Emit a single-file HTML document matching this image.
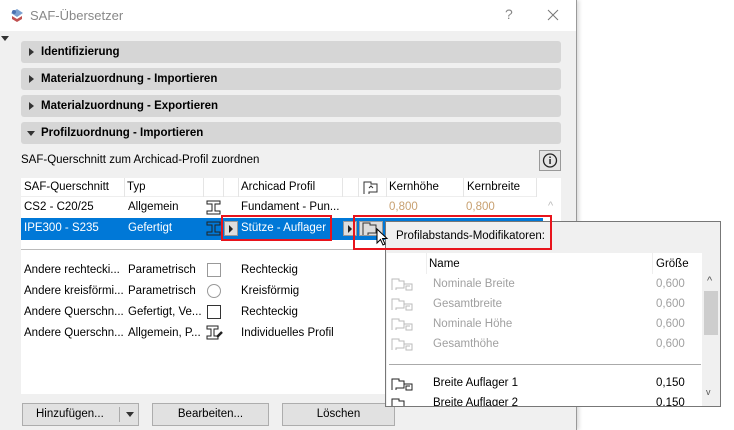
<!DOCTYPE html>
<html><head><meta charset="utf-8"><style>
*{box-sizing:border-box;margin:0;padding:0}
body{width:734px;height:430px;overflow:hidden;background:#fff;font-family:"Liberation Sans",sans-serif;font-size:11.5px;color:#000;position:relative}
.a{position:absolute;white-space:nowrap}
.dlg{position:absolute;left:0;top:0;width:577px;height:430px;background:#f0f0f0;border-right:1px solid #9a9a9a;box-shadow:2px 0 4px rgba(0,0,0,.15)}
.title{position:absolute;left:0;top:0;width:576px;height:31px;background:#fff}
.sec{position:absolute;left:21px;width:540px;height:22px;background:#d6d6d6;border-radius:3px;font-weight:bold;font-size:11.5px;line-height:22px;padding-left:20px}
.sec:before{content:"";position:absolute;left:8px;top:7px;border-left:5px solid #333;border-top:4px solid transparent;border-bottom:4px solid transparent}
.sec.open:before{left:6px;top:9px;border-top:5px solid #333;border-left:4px solid transparent;border-right:4px solid transparent;border-bottom:0}
.btn{position:absolute;top:403px;height:23px;background:#e1e1e1;border:1px solid #adadad;text-align:center;line-height:21px}
.g{color:#a0a0a0}
.o{color:#c8a070}
.red{position:absolute;border:2px solid #e8141c}
</style></head><body>
<div class="dlg">
<div class="title"></div>
<svg class="a" style="left:9px;top:7px" width="16" height="16" viewBox="0 0 16 16"><path d="M2 6 L8 2 L14 6 L8 10Z" fill="#7aa0d0"/><path d="M3 9 L8 12 L13 9 L13 12 L8 15 L3 12Z" fill="#c05050"/><circle cx="5" cy="5" r="2" fill="#4a70b0"/></svg>
<div class="a" style="left:30px;top:8px;font-size:13px;color:#888">SAF-Übersetzer</div>
<div class="a" style="left:505px;top:6px;font-size:14px;color:#888">?</div>
<svg class="a" style="left:547px;top:9px" width="12" height="12"><path d="M1 1L11 11M11 1L1 11" stroke="#777" stroke-width="1"/></svg>
<div class="a" style="left:1px;top:36px;border-top:5px solid #333;border-left:4px solid transparent;border-right:4px solid transparent"></div>
<div class="sec" style="top:41px">Identifizierung</div>
<div class="sec" style="top:68px">Materialzuordnung - Importieren</div>
<div class="sec" style="top:95px">Materialzuordnung - Exportieren</div>
<div class="sec open" style="top:122px">Profilzuordnung - Importieren</div>
<div class="a" style="left:21px;top:154px">SAF-Querschnitt zum Archicad-Profil zuordnen</div>
<div class="a" style="left:539px;top:150px;width:22px;height:21px;border:1px solid #999;background:#e4e4e4"><svg width="20" height="19"><circle cx="10" cy="9.5" r="6.5" fill="none" stroke="#222" stroke-width="1.3"/><rect x="9.3" y="8" width="1.5" height="5" fill="#222"/><rect x="9.3" y="5.5" width="1.5" height="1.5" fill="#222"/></svg></div>
<div class="a" style="left:21px;top:178px;width:540px;height:216px;background:#fff"></div>
<div class="a" style="left:21px;top:178px;width:515px;height:19px;border-bottom:1px solid #eee"></div>
<div class="a" style="left:124px;top:178px;height:19px;border-left:1px solid #e5e5e5"></div>
<div class="a" style="left:203px;top:178px;height:19px;border-left:1px solid #e5e5e5"></div>
<div class="a" style="left:223px;top:178px;height:19px;border-left:1px solid #e5e5e5"></div>
<div class="a" style="left:238px;top:178px;height:19px;border-left:1px solid #e5e5e5"></div>
<div class="a" style="left:342px;top:178px;height:19px;border-left:1px solid #e5e5e5"></div>
<div class="a" style="left:358px;top:178px;height:19px;border-left:1px solid #e5e5e5"></div>
<div class="a" style="left:386px;top:178px;height:19px;border-left:1px solid #e5e5e5"></div>
<div class="a" style="left:463px;top:178px;height:19px;border-left:1px solid #e5e5e5"></div>
<div class="a" style="left:536px;top:178px;height:19px;border-left:1px solid #e5e5e5"></div>
<div class="a" style="left:24px;top:181px">SAF-Querschnitt</div>
<div class="a" style="left:127px;top:181px">Typ</div>
<div class="a" style="left:241px;top:181px">Archicad Profil</div>
<svg class="a" style="left:363px;top:180px" width="18" height="15"><path d="M1 14V2H8V4H14V12H6V14" fill="none" stroke="#333"/><path d="M6 8L8 6L10 8" fill="none" stroke="#333"/></svg>
<div class="a" style="left:389px;top:181px">Kernhöhe</div>
<div class="a" style="left:467px;top:181px">Kernbreite</div>
<div class="a" style="left:24px;top:201px">CS2 - C20/25</div>
<div class="a" style="left:128px;top:201px">Allgemein</div>
<svg class="a" style="left:206px;top:200px" width="16" height="15"><path d="M1 1H14V4H9V11H14V14H1V11H6V4H1Z" fill="none" stroke="#222"/></svg>
<div class="a" style="left:241px;top:201px">Fundament - Pun...</div>
<div class="a o" style="left:389px;top:201px">0,800</div>
<div class="a o" style="left:466px;top:201px">0,800</div>
<div class="a" style="left:548px;top:200px;color:#bbb;font-size:11px">^</div>
<div class="a" style="left:21px;top:218px;width:522px;height:22px;background:#0078d7"></div>
<div class="a" style="left:24px;top:222px;color:#fff">IPE300 - S235</div>
<div class="a" style="left:128px;top:222px;color:#fff">Gefertigt</div>
<svg class="a" style="left:206px;top:221px" width="16" height="15"><path d="M1 1H14V4H9V11H14V14H1V11H6V4H1Z" fill="none" stroke="#222"/></svg>
<div class="a" style="left:224px;top:221px;width:14px;height:15px;background:#ddd;border:1px solid #999"></div>
<div class="a" style="left:229px;top:225px;border-left:4px solid #222;border-top:4px solid transparent;border-bottom:4px solid transparent"></div>
<div class="a" style="left:241px;top:222px;color:#fff">Stütze - Auflager</div>
<div class="a" style="left:343px;top:221px;width:14px;height:15px;background:#ddd;border:1px solid #999"></div>
<div class="a" style="left:348px;top:225px;border-left:4px solid #222;border-top:4px solid transparent;border-bottom:4px solid transparent"></div>
<div class="a" style="left:359px;top:221px;width:24px;height:15px;background:#ddd;border:1px solid #999"></div>
<svg class="a" style="left:362px;top:221px" width="18" height="15"><path d="M1 14V2H8V4H14V12H6V14" fill="none" stroke="#333"/></svg>
<div class="a" style="left:21px;top:249px;width:515px;border-top:1px solid #bbb"></div>
<div class="a" style="left:24px;top:264px">Andere rechtecki...</div>
<div class="a" style="left:128px;top:264px">Parametrisch</div>
<div class="a" style="left:207px;top:263px;width:14px;height:14px;border:1px solid #999"></div>
<div class="a" style="left:241px;top:264px">Rechteckig</div>
<div class="a" style="left:24px;top:285px">Andere kreisförmi...</div>
<div class="a" style="left:128px;top:285px">Parametrisch</div>
<div class="a" style="left:207px;top:284px;width:14px;height:14px;border:1px solid #999;border-radius:50%"></div>
<div class="a" style="left:241px;top:285px">Kreisförmig</div>
<div class="a" style="left:24px;top:306px">Andere Querschn...</div>
<div class="a" style="left:128px;top:306px">Gefertigt, Ve...</div>
<div class="a" style="left:207px;top:305px;width:14px;height:14px;border:1px solid #333"></div>
<div class="a" style="left:241px;top:306px">Rechteckig</div>
<div class="a" style="left:24px;top:327px">Andere Querschn...</div>
<div class="a" style="left:128px;top:327px">Allgemein, P...</div>
<svg class="a" style="left:206px;top:325px" width="18" height="16"><path d="M1 1H12V4H8V11H12V14H1V11H5V4H1Z" fill="none" stroke="#222"/><path d="M11 12L16 7" stroke="#222" stroke-width="2.5"/></svg>
<div class="a" style="left:241px;top:327px">Individuelles Profil</div>
<div class="btn" style="left:22px;width:117px;text-align:left;padding-left:13px">Hinzufügen...<span style="position:absolute;left:96px;top:3px;height:15px;border-left:1px solid #aaa"></span><span style="position:absolute;left:103px;top:8px;border-top:5px solid #333;border-left:4px solid transparent;border-right:4px solid transparent"></span></div>
<div class="btn" style="left:152px;width:117px">Bearbeiten...</div>
<div class="btn" style="left:282px;width:113px">Löschen</div>
</div>
<!-- popup -->
<div class="a" style="left:385px;top:221px;width:336px;height:186px;background:#f0f0f0;border:1px solid #777"></div>
<div class="a" style="left:396px;top:230px">Profilabstands-Modifikatoren:</div>
<div class="a" style="left:387px;top:253px;width:315px;height:153px;background:#fff"></div>
<div class="a" style="left:702px;top:274px;width:18px;height:132px;background:#f0f0f0"></div>
<div class="a" style="left:704px;top:291px;width:14px;height:44px;background:#cdcdcd"></div>
<div class="a" style="left:707px;top:275px;font-size:11px;color:#555">^</div>
<div class="a" style="left:706px;top:387px;font-size:9px;color:#555">v</div>
<div class="a" style="left:426px;top:253px;height:21px;border-left:1px solid #eee"></div>
<div class="a" style="left:652px;top:253px;height:21px;border-left:1px solid #eee"></div>
<div class="a" style="left:429px;top:258px">Name</div>
<div class="a" style="left:656px;top:258px">Größe</div>
<div class="a g" style="left:433px;top:278px">Nominale Breite</div><div class="a g" style="left:656px;top:278px">0,600</div>
<div class="a g" style="left:433px;top:298px">Gesamtbreite</div><div class="a g" style="left:656px;top:298px">0,600</div>
<div class="a g" style="left:433px;top:318px">Nominale Höhe</div><div class="a g" style="left:656px;top:318px">0,600</div>
<div class="a g" style="left:433px;top:338px">Gesamthöhe</div><div class="a g" style="left:656px;top:338px">0,600</div>
<svg class="a" style="left:391px;top:276px" width="28" height="130">
<g fill="none" stroke="#bbb"><path d="M1 14V3H8V5H13V12H5V14"/><path d="M13 8H21V14H15V10H19"/></g>
<g fill="none" stroke="#bbb" transform="translate(0,20)"><path d="M1 14V3H8V5H13V12H5V14"/><path d="M13 8H21V14H15V10H19"/></g>
<g fill="none" stroke="#bbb" transform="translate(0,40)"><path d="M1 14V3H8V5H13V12H5V14"/><path d="M13 8H21V14H15V10H19"/></g>
<g fill="none" stroke="#bbb" transform="translate(0,60)"><path d="M1 14V3H8V5H13V12H5V14"/><path d="M13 8H21V14H15V10H19"/></g>
<g fill="none" stroke="#222" transform="translate(0,100)"><path d="M1 14V3H8V5H13V12H5V14"/><path d="M13 8H21V14H15V10H19"/></g>
<g fill="none" stroke="#222" transform="translate(0,120)"><path d="M1 14V3H8V5H13V12H5V14"/></g>
</svg>
<div class="a" style="left:389px;top:364px;width:312px;border-top:1px solid #aaa"></div>
<div class="a" style="left:433px;top:377px">Breite Auflager 1</div><div class="a" style="left:656px;top:377px">0,150</div>
<div class="a" style="left:387px;top:396px;width:315px;height:10px;overflow:hidden"><div class="a" style="left:46px;top:1px">Breite Auflager 2</div><div class="a" style="left:269px;top:1px">0,150</div></div>
<svg class="a" style="left:376px;top:228px" width="14" height="20"><path d="M1 1V15L4.5 11.5L7 17L9 16L6.5 10.5H11Z" fill="#fff" stroke="#000"/></svg>
<div class="red" style="left:221px;top:215px;width:111px;height:26px"></div>
<div class="red" style="left:353px;top:215px;width:199px;height:35px"></div>
</body></html>
